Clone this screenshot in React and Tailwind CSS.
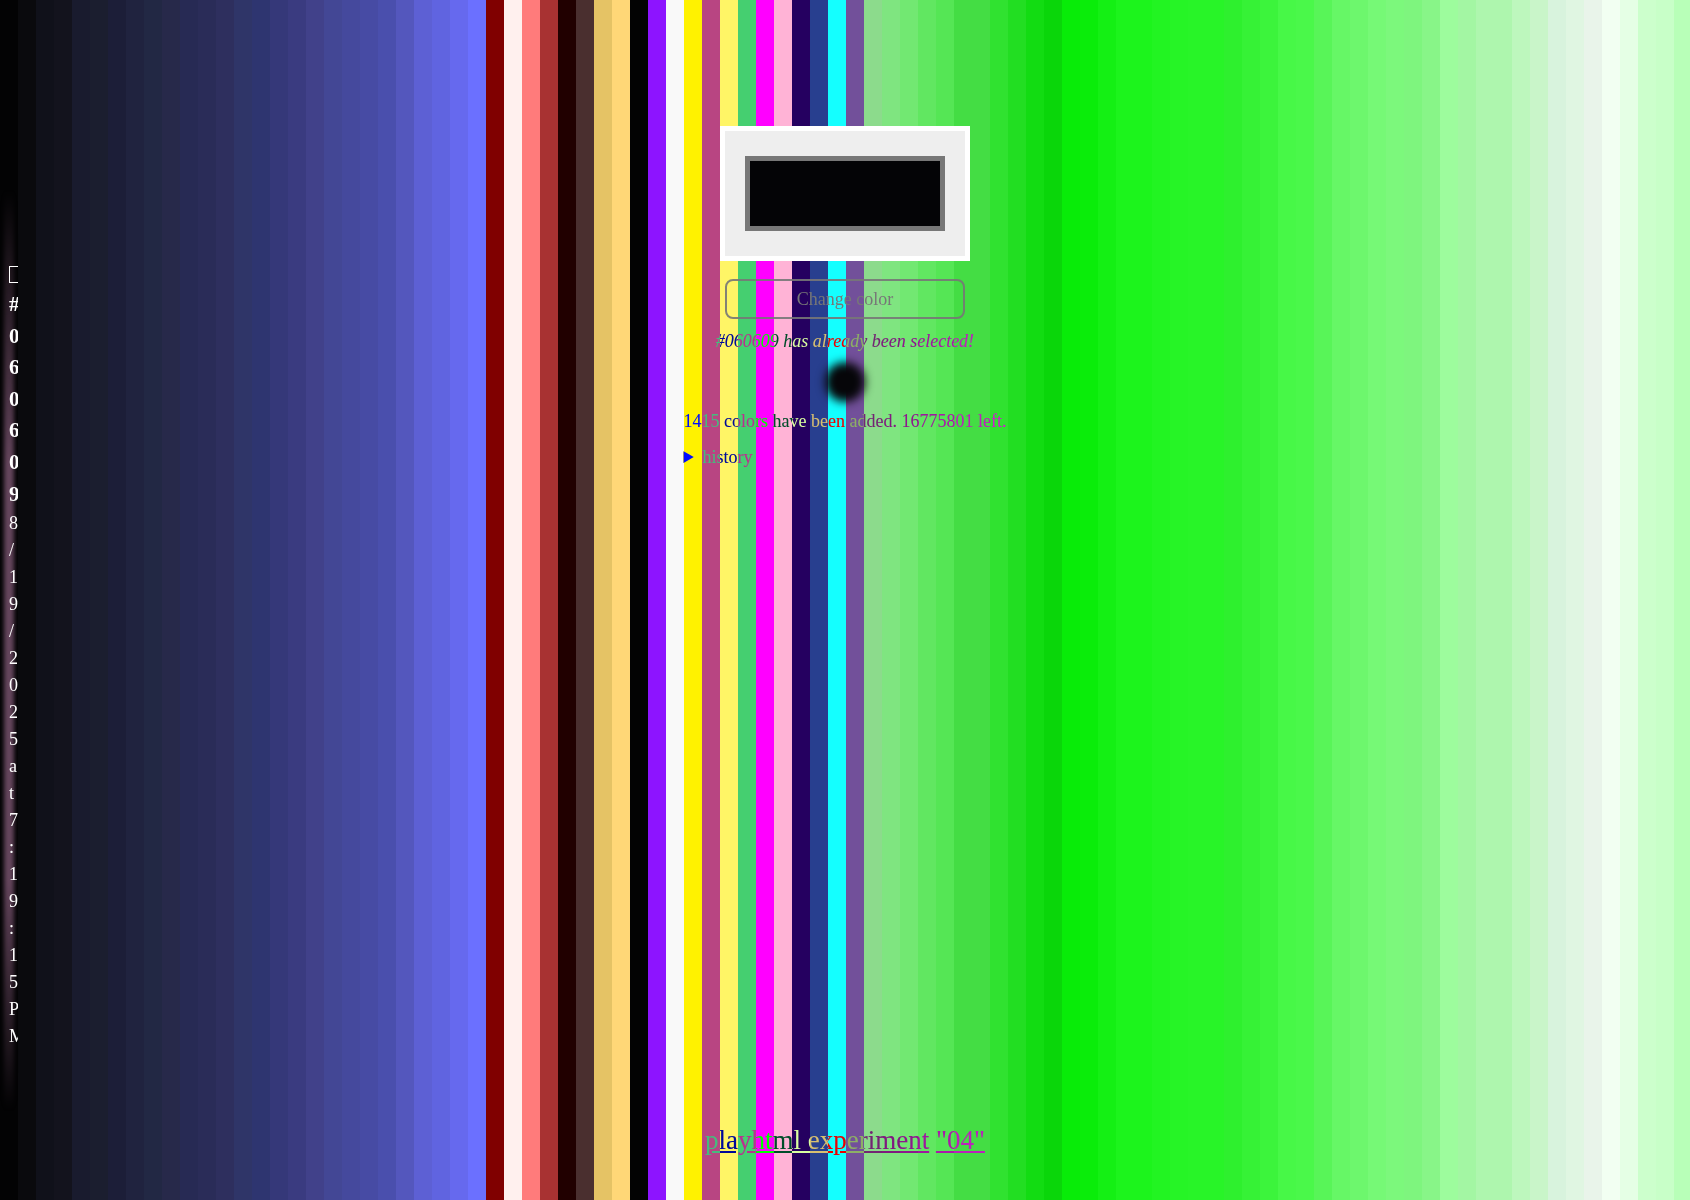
import React from 'react';

const stripes = [
  '#030304', '#0a0a0d', '#10111a', '#13131d', '#191b2e', '#1b1e2f', '#1c1e38', '#20233f', '#222844',
  '#27294a', '#272a54', '#2a2c58', '#2e2f5e', '#2f3568', '#2e3570', '#353879', '#3a3b80', '#41418a',
  '#434795', '#45499d', '#474ba4', '#4a4fad', '#5457bd', '#5d60d4', '#6064e0', '#6669ee', '#6b70ff',
  '#800000', '#fff0ee', '#ff7b7b', '#a83232', '#210000', '#4a2f2f', '#e5c365', '#ffd777', '#030303',
  '#8d14ff', '#f9f9f9', '#fff200', '#b84582', '#fff566', '#45cf70', '#ff00ff', '#ffb3d6', '#250060',
  '#283f8f', '#14ffff', '#72509a', '#8cdb8c', '#7fe580', '#72e872', '#61e761', '#55e655', '#44dd44',
  '#44dd44', '#30e230', '#22de22', '#12dc12', '#0ad60a', '#08ec08', '#0aed0a', '#14f014', '#1cf41c',
  '#1cf41c', '#22f422', '#26f426', '#28f428', '#28f428', '#2ef02e', '#36f236', '#3cf43c', '#47f847',
  '#4af84a', '#58f558', '#66f766', '#6df76d', '#76f976', '#7cf87c', '#7ef57e', '#88f588', '#9dfc9d',
  '#a3f6a3', '#aef6ae', '#aef6ae', '#bdf7bd', '#c9f5c9', '#d8f3dd', '#e0f6e2', '#e9f4ea', '#f2fff2',
  '#e5ffe5', '#ccffcc', '#c8ffc8', '#b8ffb8',
];

function App() {
  return (
    <div className="relative h-[1200px] w-full overflow-hidden font-['Liberation_Serif',serif] text-[18px] text-white">
      {/* color history stripes */}
      <div className="absolute inset-0 flex">
        {stripes.map((color, i) => (
          <div key={i} className="h-full w-[18px] shrink-0" style={{ backgroundColor: color }}></div>
        ))}
      </div>

      {/* blurred glow on the first stripe */}
      <div className="absolute left-1 top-[190px] h-[920px] w-2.5 bg-[linear-gradient(to_bottom,transparent,#64455c_30%,#64455c_75%,transparent)] blur-[2px]"></div>

      {/* latest color label, squeezed into the first stripe */}
      <div className="absolute left-0 top-[262px] w-[18px] overflow-hidden pl-[9px] leading-[27px] wrap-anywhere">
        {/* missing-glyph box */}
        <div className="h-[27px] pt-1">
          <div className="h-[17px] w-3 border border-white"></div>
        </div>
        <div className="text-[21px] font-bold leading-[31.6px]">#060609</div>
        <div>8/19/2025 at 7:19:15 PM</div>
      </div>

      <div className="relative flex h-full flex-col items-center pt-[126px] pb-10">
        <div className="border-[5px] border-white bg-[#eeeeee] px-5 py-[25px]">
          <div className="h-[75px] w-[200px] border-[5px] border-[#777777] bg-[#040406]"></div>
        </div>

        <button className="mt-[18px] h-10 w-60 rounded-lg border-2 border-[#777777]/90 text-[18px] text-[#777777]">
          Change color
        </button>

        <p className="mt-[9px] italic mix-blend-difference">#060609 has already been selected!</p>

        <div className="mt-[7px] h-10 w-10 rounded-full bg-[#060609] blur-[5px]"></div>

        <div className="mt-[6px] mix-blend-difference">
          <p>1415 colors have been added. 16775801 left.</p>
          <details className="mt-[9px]">
            <summary>history</summary>
          </details>
        </div>

        <div className="mt-auto text-[27px] mix-blend-difference">
          <a className="underline" href="#">playhtml experiment</a> <a className="underline" href="#">"04"</a>
        </div>
      </div>
    </div>
  );
}

export default App;
